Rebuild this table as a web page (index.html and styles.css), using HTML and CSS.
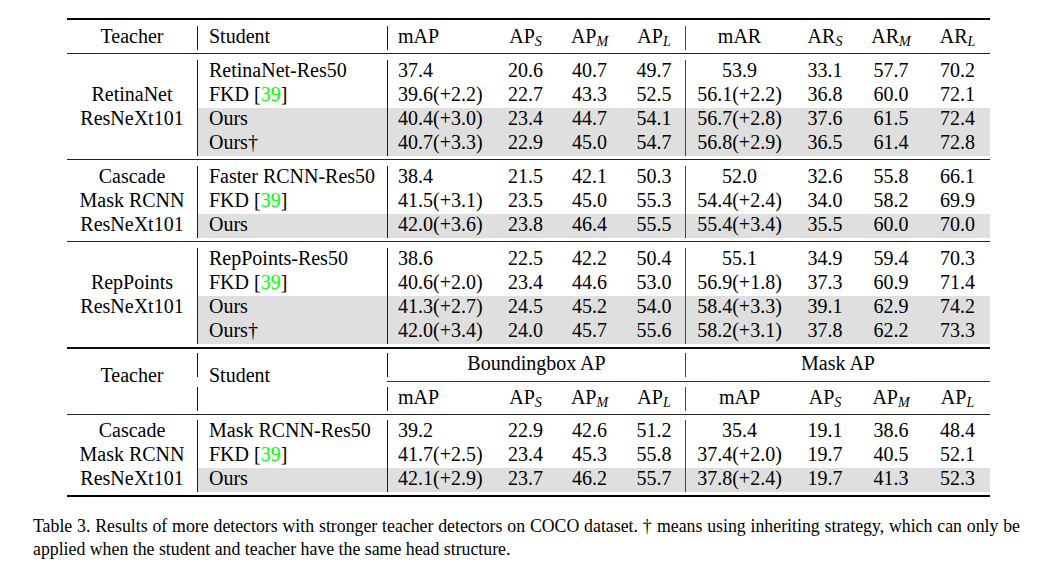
FILE: index.html
```html
<!DOCTYPE html>
<html>
<head>
<meta charset="utf-8">
<title>Table 3</title>
<link rel="stylesheet" href="styles.css">
</head>
<body>
<div class="page">
  <div class="tbl">
    <div class="rule top"></div>

    <div class="grid">
      <div class="teacher r1">Teacher</div>
      <div class="row">
        <div>Student</div><div>mAP</div><div>AP<sub>S</sub></div><div>AP<sub>M</sub></div><div>AP<sub>L</sub></div>
        <div>mAR</div><div>AR<sub>S</sub></div><div>AR<sub>M</sub></div><div>AR<sub>L</sub></div>
      </div>
    </div>

    <div class="rule"></div>

    <div class="grid">
      <div class="teacher r4"><div class="ln">RetinaNet</div><div class="ln">ResNeXt101</div></div>
      <div class="row">
        <div>RetinaNet-Res50</div><div>37.4</div><div>20.6</div><div>40.7</div><div>49.7</div>
        <div>53.9</div><div>33.1</div><div>57.7</div><div>70.2</div>
      </div>
      <div class="row">
        <div>FKD [<span class="cite">39</span>]</div><div>39.6(+2.2)</div><div>22.7</div><div>43.3</div><div>52.5</div>
        <div>56.1(+2.2)</div><div>36.8</div><div>60.0</div><div>72.1</div>
      </div>
      <div class="row g">
        <div>Ours</div><div>40.4(+3.0)</div><div>23.4</div><div>44.7</div><div>54.1</div>
        <div>56.7(+2.8)</div><div>37.6</div><div>61.5</div><div>72.4</div>
      </div>
      <div class="row g">
        <div>Ours†</div><div>40.7(+3.3)</div><div>22.9</div><div>45.0</div><div>54.7</div>
        <div>56.8(+2.9)</div><div>36.5</div><div>61.4</div><div>72.8</div>
      </div>
    </div>

    <div class="rule"></div>

    <div class="grid">
      <div class="teacher r3"><div class="ln">Cascade</div><div class="ln">Mask RCNN</div><div class="ln">ResNeXt101</div></div>
      <div class="row">
        <div>Faster RCNN-Res50</div><div>38.4</div><div>21.5</div><div>42.1</div><div>50.3</div>
        <div>52.0</div><div>32.6</div><div>55.8</div><div>66.1</div>
      </div>
      <div class="row">
        <div>FKD [<span class="cite">39</span>]</div><div>41.5(+3.1)</div><div>23.5</div><div>45.0</div><div>55.3</div>
        <div>54.4(+2.4)</div><div>34.0</div><div>58.2</div><div>69.9</div>
      </div>
      <div class="row g">
        <div>Ours</div><div>42.0(+3.6)</div><div>23.8</div><div>46.4</div><div>55.5</div>
        <div>55.4(+3.4)</div><div>35.5</div><div>60.0</div><div>70.0</div>
      </div>
    </div>

    <div class="rule"></div>

    <div class="grid">
      <div class="teacher r4"><div class="ln">RepPoints</div><div class="ln">ResNeXt101</div></div>
      <div class="row">
        <div>RepPoints-Res50</div><div>38.6</div><div>22.5</div><div>42.2</div><div>50.4</div>
        <div>55.1</div><div>34.9</div><div>59.4</div><div>70.3</div>
      </div>
      <div class="row">
        <div>FKD [<span class="cite">39</span>]</div><div>40.6(+2.0)</div><div>23.4</div><div>44.6</div><div>53.0</div>
        <div>56.9(+1.8)</div><div>37.3</div><div>60.9</div><div>71.4</div>
      </div>
      <div class="row g">
        <div>Ours</div><div>41.3(+2.7)</div><div>24.5</div><div>45.2</div><div>54.0</div>
        <div>58.4(+3.3)</div><div>39.1</div><div>62.9</div><div>74.2</div>
      </div>
      <div class="row g">
        <div>Ours†</div><div>42.0(+3.4)</div><div>24.0</div><div>45.7</div><div>55.6</div>
        <div>58.2(+3.1)</div><div>37.8</div><div>62.2</div><div>73.3</div>
      </div>
    </div>

    <div class="rule join"></div>

    <div class="grid h2">
      <div class="teacher hmid">Teacher</div>
      <div class="vseg top-seg"></div>
      <div class="vseg bot-seg"></div>
      <div class="stud hmid">Student</div>
      <div class="group box">Boundingbox AP</div>
      <div class="group mask">Mask AP</div>
      <div class="cmid"></div>
      <div class="sub first">mAP</div>
      <div class="sub">AP<sub>S</sub></div>
      <div class="sub">AP<sub>M</sub></div>
      <div class="sub">AP<sub>L</sub></div>
      <div class="sub split">mAP</div>
      <div class="sub">AP<sub>S</sub></div>
      <div class="sub">AP<sub>M</sub></div>
      <div class="sub">AP<sub>L</sub></div>
    </div>

    <div class="rule mid2"></div>

    <div class="grid">
      <div class="teacher r3"><div class="ln">Cascade</div><div class="ln">Mask RCNN</div><div class="ln">ResNeXt101</div></div>
      <div class="row">
        <div>Mask RCNN-Res50</div><div>39.2</div><div>22.9</div><div>42.6</div><div>51.2</div>
        <div>35.4</div><div>19.1</div><div>38.6</div><div>48.4</div>
      </div>
      <div class="row">
        <div>FKD [<span class="cite">39</span>]</div><div>41.7(+2.5)</div><div>23.4</div><div>45.3</div><div>55.8</div>
        <div>37.4(+2.0)</div><div>19.7</div><div>40.5</div><div>52.1</div>
      </div>
      <div class="row g">
        <div>Ours</div><div>42.1(+2.9)</div><div>23.7</div><div>46.2</div><div>55.7</div>
        <div>37.8(+2.4)</div><div>19.7</div><div>41.3</div><div>52.3</div>
      </div>
    </div>

    <div class="rule bottom"></div>
  </div>

  <p class="caption">Table 3. Results of more detectors with stronger teacher detectors on COCO dataset. † means using inheriting strategy, which can only be applied when the student and teacher have the same head structure.</p>
</div>
</body>
</html>
```

FILE: styles.css
```css
html, body {
  margin: 0;
  padding: 0;
  background: #ffffff;
}

body {
  font-family: "Liberation Serif", "Times New Roman", serif;
  color: #000000;
}

.page {
  padding-top: 18px;
}

.tbl {
  margin-left: 67px;
  width: 923px;
}

.grid {
  display: grid;
  grid-template-columns: 130px 190px 108px 61px 67px 62px 108px 64px 68px 65px;
  grid-auto-rows: 24px;
  font-size: 20px;
}

/* booktabs-like rules */
.rule {
  height: 1px;
  background: #222222;
  margin: 3px 0 6px;
}

.rule.top {
  height: 2px;
  background: #000000;
  margin: 0 0 6px;
}

.rule.join {
  height: 2px;
  background: #111111;
  margin: 3px 0 4px;
}

.rule.mid2 {
  margin: 3px 0 5px;
}

.rule.bottom {
  height: 2px;
  background: #000000;
  margin: 3px 0 0;
}

/* teacher column */
.teacher {
  grid-column: 1;
  align-self: center;
  text-align: center;
  white-space: nowrap;
}

.teacher.r1 {
  grid-row: 1 / span 1;
  line-height: 20px;
  padding-bottom: 4px;
}

.teacher.r3 {
  grid-row: 1 / span 3;
}

.teacher.r4 {
  grid-row: 1 / span 4;
}

.ln {
  line-height: 20px;
  padding-bottom: 4px;
}

/* data rows */
.row {
  display: contents;
}

.row > div {
  line-height: 20px;
  padding-bottom: 4px;
  text-align: center;
  white-space: nowrap;
}

.row > div:nth-child(1) {
  border-left: 1px solid #1a1a1a;
  padding-left: 11px;
  text-align: left;
}

.row > div:nth-child(2) {
  border-left: 1px solid #1a1a1a;
  padding-left: 10px;
  text-align: left;
}

.row > div:nth-child(6) {
  border-left: 1px solid #444444;
}

.row.g > div {
  background: #dfdfdf;
}

sub {
  font-size: 14px;
  font-style: italic;
  line-height: 0;
  vertical-align: -3px;
}

.cite {
  color: #00ff00;
}

/* second header block */
.h2 {
  grid-template-rows: 24px 10px 24px;
}

.hmid {
  grid-row: 1 / 4;
  align-self: center;
  line-height: 20px;
  padding-bottom: 4px;
  margin-bottom: 10px;
}

.stud {
  grid-column: 2;
  padding-left: 12px;
  white-space: nowrap;
}

.vseg {
  grid-column: 2;
  border-left: 1px solid #1a1a1a;
}

.vseg.top-seg {
  grid-row: 1;
}

.vseg.bot-seg {
  grid-row: 3;
}

.group {
  grid-row: 1;
  line-height: 20px;
  padding-bottom: 4px;
  text-align: center;
  white-space: nowrap;
}

.group.box {
  grid-column: 3 / 7;
  border-left: 1px solid #1a1a1a;
}

.group.mask {
  grid-column: 7 / 11;
  border-left: 1px solid #444444;
}

.cmid {
  grid-column: 3 / 11;
  grid-row: 2;
  align-self: start;
  height: 1px;
  margin-top: 4px;
  background: #333333;
}

.sub {
  grid-row: 3;
  line-height: 20px;
  padding-bottom: 4px;
  text-align: center;
  white-space: nowrap;
}

.sub.first {
  grid-column: 3;
  border-left: 1px solid #1a1a1a;
  padding-left: 10px;
  text-align: left;
}

.sub.split {
  border-left: 1px solid #444444;
}

/* caption */
.caption {
  margin: 18px 0 0 33px;
  width: 987px;
  font-size: 17.8px;
  line-height: 23px;
  text-align: justify;
}
```
